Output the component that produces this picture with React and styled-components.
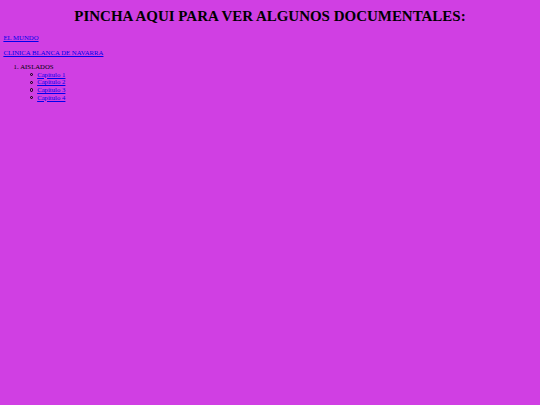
import styled, { createGlobalStyle } from "styled-components";

const GlobalStyle = createGlobalStyle`
  html, body {
    margin: 0;
    padding: 0;
    background-color: #d03fe3;
  }
`;

// the page was laid out at 1280px wide and shrunk to fit 540
const Page = styled.div`
  zoom: 0.421875;
  padding: 8px;
  font-family: "Liberation Serif", "Times New Roman", serif;
  font-size: 16px;
  line-height: 18.2px;
  color: #000;
  min-height: 944px;
`;

const Title = styled.h1`
  text-align: center;
  font-size: 35.5px;
  line-height: 41px;
  font-weight: bold;
  margin: 11px 0 21px;
`;

const Para = styled.p`
  margin: 16px 0;
`;

const DocLink = styled.a`
  color: #0000ee;
  text-decoration: underline;
`;

const Series = styled.ol`
  margin: 16px 0;
  padding-left: 40px;
`;

const Chapters = styled.ul`
  list-style: none;
  margin: 0;
  padding-left: 40px;
`;

const Chapter = styled.li`
  &::before {
    content: "";
    display: inline-block;
    box-sizing: border-box;
    width: 8px;
    height: 8px;
    border: 1.6px solid #000;
    border-radius: 50%;
    margin-left: -18px;
    margin-right: 10px;
    vertical-align: 1px;
  }
`;

const chapters = ["Capitulo 1", "Capitulo 2", "Capitulo 3", "Capitulo 4"];

export default function App() {
  return (
    <>
      <GlobalStyle />
      <Page>
        <Title>PINCHA AQUI PARA VER ALGUNOS DOCUMENTALES:</Title>
        <Para>
          <DocLink href="#">EL MUNDO</DocLink>
        </Para>
        <Para>
          <DocLink href="#">CLINICA BLANCA DE NAVARRA</DocLink>
        </Para>
        <Series>
          <li>
            AISLADOS
            <Chapters>
              {chapters.map((c) => (
                <Chapter key={c}>
                  <DocLink href="#">{c}</DocLink>
                </Chapter>
              ))}
            </Chapters>
          </li>
        </Series>
      </Page>
    </>
  );
}
